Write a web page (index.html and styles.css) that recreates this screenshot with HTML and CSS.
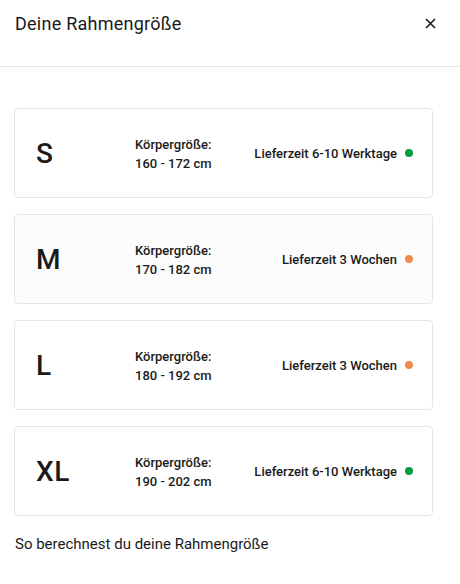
FILE: index.html
```html
<!DOCTYPE html>
<html lang="de">
<head>
<meta charset="utf-8">
<link rel="stylesheet" href="styles.css">
</head>
<body>
<div class="modal">
  <header class="header">
    <h1 class="title">Deine Rahmengröße</h1>
    <button class="close" aria-label="Schließen">
      <svg width="11" height="11" viewBox="0 0 11 11"><path d="M1 1L10 10M10 1L1 10" stroke="#1a1a1a" stroke-width="1.6" fill="none"/></svg>
    </button>
  </header>
  <div class="list">
    <div class="card">
      <div class="size">S</div>
      <div class="height"><div>Körpergröße:</div><div>160 - 172 cm</div></div>
      <div class="delivery">Lieferzeit 6-10 Werktage <span class="dot green"></span></div>
    </div>
    <div class="card card-muted">
      <div class="size">M</div>
      <div class="height"><div>Körpergröße:</div><div>170 - 182 cm</div></div>
      <div class="delivery">Lieferzeit 3 Wochen <span class="dot orange"></span></div>
    </div>
    <div class="card">
      <div class="size">L</div>
      <div class="height"><div>Körpergröße:</div><div>180 - 192 cm</div></div>
      <div class="delivery">Lieferzeit 3 Wochen <span class="dot orange"></span></div>
    </div>
    <div class="card">
      <div class="size">XL</div>
      <div class="height"><div>Körpergröße:</div><div>190 - 202 cm</div></div>
      <div class="delivery">Lieferzeit 6-10 Werktage <span class="dot green"></span></div>
    </div>
  </div>
  <p class="footer">So berechnest du deine Rahmengröße</p>
</div>
</body>
</html>
```
FILE: styles.css
```css
* { box-sizing: border-box; }
html, body { margin: 0; padding: 0; background: #fff; }
body {
  font-family: Roboto, "Liberation Sans", sans-serif;
  color: #1a1a1a;
  width: 460px;
  height: 584px;
  overflow: hidden;
}
.header {
  display: flex;
  align-items: center;
  justify-content: space-between;
  height: 67px;
  padding: 0 24px 20px 15px;
  border-bottom: 1px solid #e6e6e6;
}
.title {
  margin: 0;
  font-size: 18px;
  font-weight: 400;
  letter-spacing: 0.25px;
}
.close {
  border: 0;
  background: none;
  padding: 0;
  width: 11px;
  height: 11px;
  display: flex;
}
.list {
  display: flex;
  flex-direction: column;
  gap: 16px;
  padding: 41px 27px 0 14px;
}
.card {
  display: grid;
  grid-template-columns: 99px 1fr auto;
  align-items: center;
  height: 90px;
  padding: 0 19px 0 21px;
  border: 1px solid #e6e6e6;
  border-radius: 4px;
  background: #fff;
}
.card-muted { background: #fcfcfc; }
.size {
  font-size: 28px;
  font-weight: 500;
  letter-spacing: 0.5px;
}
.height {
  font-size: 13px;
  font-weight: 500;
  line-height: 19px;
  margin-top: 1px;
}
.delivery {
  display: flex;
  align-items: center;
  gap: 8px;
  font-size: 13px;
  font-weight: 500;
  letter-spacing: 0;
}
.dot {
  width: 8px;
  height: 8px;
  border-radius: 50%;
  display: inline-block;
}
.green { background: #009a40; }
.orange { background: #f08a4b; }
.footer {
  margin: 19px 0 0 15px;
  font-size: 15px;
  font-weight: 400;
}
```
